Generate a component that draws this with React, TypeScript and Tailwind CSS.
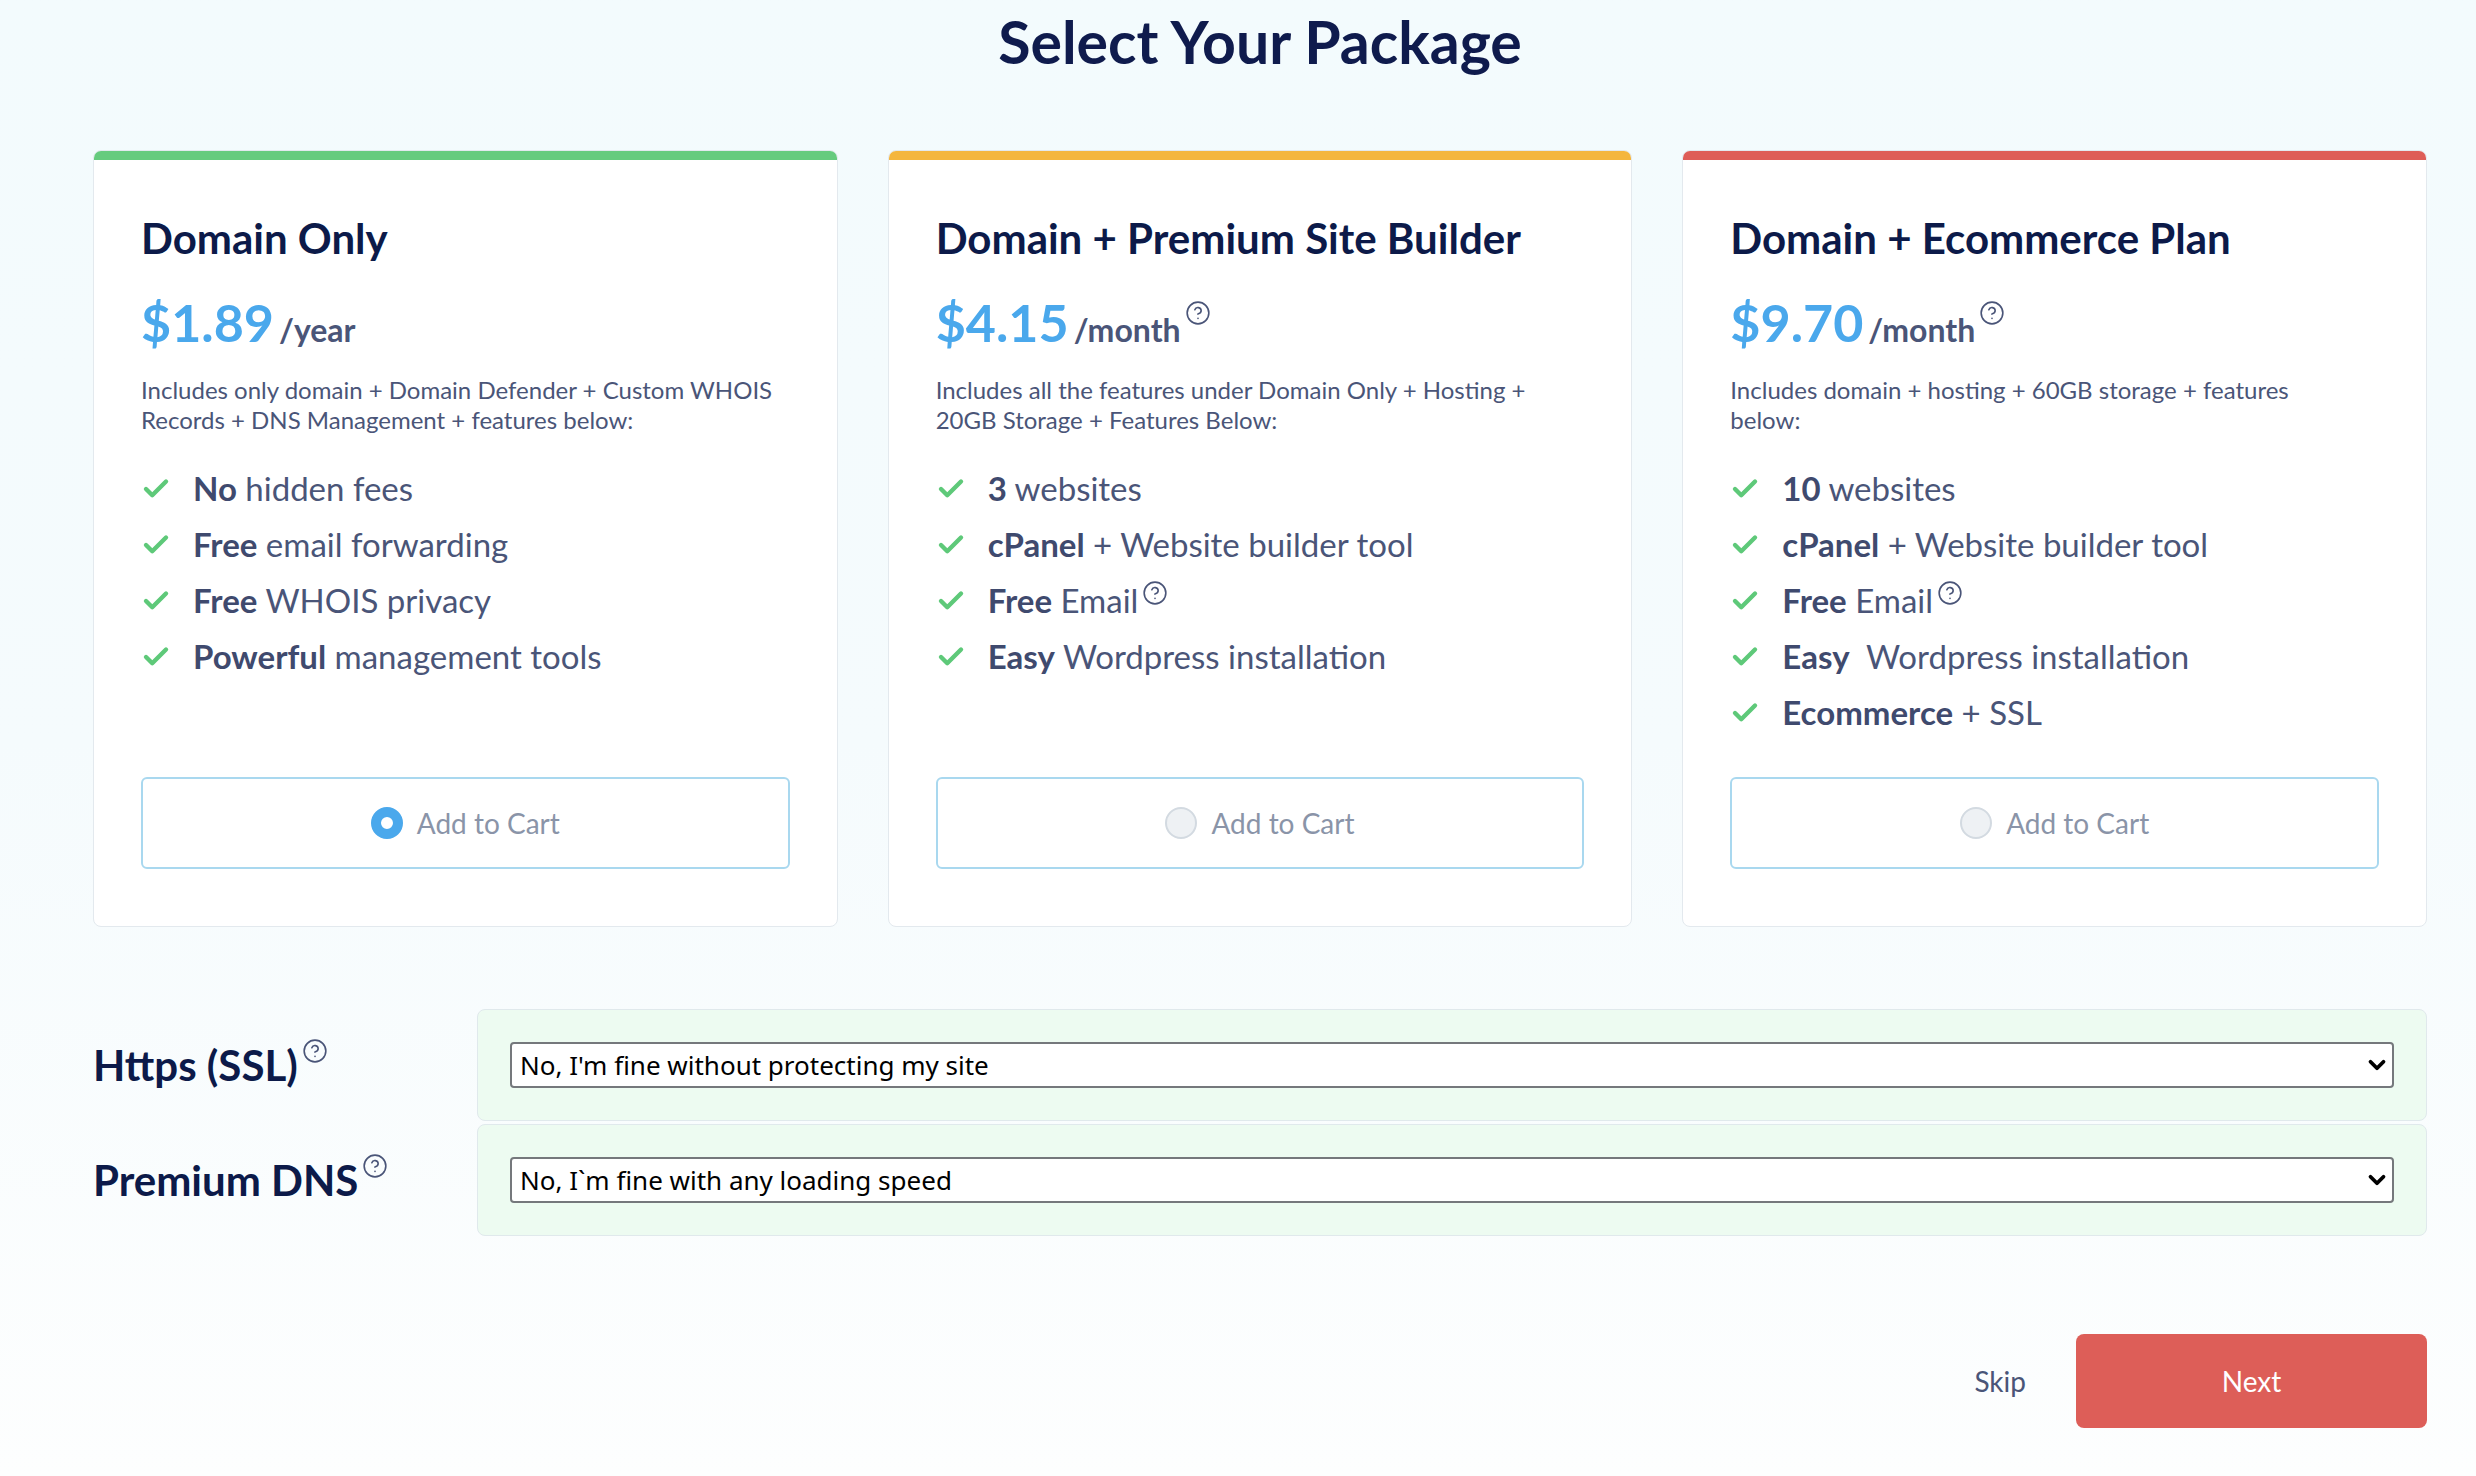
import React from "react";
import { Check, ChevronDown, CircleHelp } from "lucide-react";

type Feature = { bold: string; rest: string; help?: boolean };

type Plan = {
  name: string;
  bar: string;
  price: string;
  period: string;
  periodHelp: boolean;
  desc: string;
  features: Feature[];
  selected: boolean;
};

const plans: Plan[] = [
  {
    name: "Domain Only",
    bar: "bg-[#66cb7e]",
    price: "$1.89",
    period: "/year",
    periodHelp: false,
    desc: "Includes only domain + Domain Defender + Custom WHOIS\nRecords + DNS Management + features below:",
    features: [
      { bold: "No", rest: " hidden fees" },
      { bold: "Free", rest: " email forwarding" },
      { bold: "Free", rest: " WHOIS privacy" },
      { bold: "Powerful", rest: " management tools" },
    ],
    selected: true,
  },
  {
    name: "Domain + Premium Site Builder",
    bar: "bg-[#f4b63f]",
    price: "$4.15",
    period: "/month",
    periodHelp: true,
    desc: "Includes all the features under Domain Only + Hosting +\n20GB Storage + Features Below:",
    features: [
      { bold: "3", rest: " websites" },
      { bold: "cPanel", rest: " + Website builder tool" },
      { bold: "Free", rest: " Email", help: true },
      { bold: "Easy", rest: " Wordpress installation" },
    ],
    selected: false,
  },
  {
    name: "Domain + Ecommerce Plan",
    bar: "bg-[#de5d57]",
    price: "$9.70",
    period: "/month",
    periodHelp: true,
    desc: "Includes domain + hosting + 60GB storage + features\nbelow:",
    features: [
      { bold: "10", rest: " websites" },
      { bold: "cPanel", rest: " + Website builder tool" },
      { bold: "Free", rest: " Email", help: true },
      { bold: "Easy", rest: "  Wordpress installation" },
      { bold: "Ecommerce", rest: " + SSL" },
    ],
    selected: false,
  },
];

function Help({ className = "" }: { className?: string }) {
  return <CircleHelp size={26} strokeWidth={1.5} className={"inline-block shrink-0 text-[#4a5578] " + className} />;
}

function PlanCard({ plan }: { plan: Plan }) {
  return (
    <div className="flex flex-col bg-white border border-[#e3e9ee] rounded-[8px] overflow-hidden">
      <div className={"h-[9px] " + plan.bar} />
      <div className="flex flex-col flex-1 px-[47px] pt-[56px] pb-[57px]">
        <h2 className="text-[42px] leading-[44px] font-bold text-[#0c1a49]">{plan.name}</h2>
        <div className="mt-[36px] flex items-baseline h-[52px]">
          <span className="text-[52px] leading-[52px] font-bold text-[#4aa8ec]">{plan.price}</span>
          <span className="ml-[5px] text-[32px] font-bold text-[#4a5578]">{plan.period}</span>
          {plan.periodHelp && <Help className="ml-[4px] self-start mt-[4px]" />}
        </div>
        <p className="mt-[27px] text-[24px] leading-[30px] text-[#4a5578] whitespace-pre-line">{plan.desc}</p>
        <ul className="mt-[26px] mb-[36px] flex flex-col">
          {plan.features.map((f, i) => (
            <li key={i} className="flex items-center h-[56px]">
              <Check size={30} strokeWidth={3.5} className="text-[#5ec979] shrink-0" />
              <span className="ml-[22px] text-[33px] text-[#4a5578] whitespace-pre">
                <span className="font-bold text-[#3f4a6e]">{f.bold}</span>
                {f.rest}
              </span>
              {f.help && <Help className="ml-[4px] -mt-[16px]" />}
            </li>
          ))}
        </ul>
        <button className="mt-auto h-[92px] w-full flex items-center justify-center gap-[14px] border-2 border-[#a9d8ef] rounded-[6px] bg-white">
          {plan.selected ? (
            <span className="w-[32px] h-[32px] rounded-full border-[10px] border-[#4aa8ec] bg-white" />
          ) : (
            <span className="w-[32px] h-[32px] rounded-full border-2 border-[#d3dae1] bg-[#eef1f4]" />
          )}
          <span className="text-[28px] text-[#8a94a8]">Add to Cart</span>
        </button>
      </div>
    </div>
  );
}

function OptionRow({ label, value }: { label: string; value: string }) {
  return (
    <div className="flex items-center">
      <div className="w-[384px] shrink-0 flex items-start">
        <span className="text-[42px] font-bold text-[#0c1a49]">{label}</span>
        <Help className="ml-[4px] mt-[4px]" />
      </div>
      <div className="flex-1 bg-[#edfbf1] border border-[#e0e9ec] rounded-[8px] p-[32px]">
        <div className="relative">
          <select
            defaultValue={value}
            className="appearance-none w-full h-[46px] bg-white border-2 border-[#75787c] rounded-[4px] pl-[8px] text-[26px] text-black"
            style={{ fontFamily: '"Noto Sans", sans-serif' }}
          >
            <option>{value}</option>
          </select>
          <ChevronDown size={26} strokeWidth={3.5} className="absolute right-[4px] top-[10px] text-black pointer-events-none" />
        </div>
      </div>
    </div>
  );
}

export default function App() {
  return (
    <div
      className="min-h-[1476px] w-full bg-gradient-to-b from-[#f3fbfd] via-[#f5fbfd] to-[#fdfefe] pl-[93px] pr-[49px]"
      style={{ fontFamily: 'Lato, "Noto Sans", sans-serif' }}
    >
      <h1 className="pt-[6px] text-center text-[59px] leading-[72px] font-bold text-[#0f1b4d]">Select Your Package</h1>
      <div className="mt-[72px] grid grid-cols-3 gap-[50px]">
        {plans.map((p) => (
          <PlanCard key={p.name} plan={p} />
        ))}
      </div>
      <div className="mt-[82px] flex flex-col gap-[3px]">
        <OptionRow label="Https (SSL)" value="No, I'm fine without protecting my site" />
        <OptionRow label="Premium DNS" value="No, I`m fine with any loading speed" />
      </div>
      <div className="mt-[98px] flex items-center justify-end gap-[50px]">
        <span className="text-[28px] text-[#4a5578]">Skip</span>
        <button className="w-[351px] h-[94px] rounded-[8px] bg-[#dd5e58] text-white text-[28px]">Next</button>
      </div>
    </div>
  );
}
